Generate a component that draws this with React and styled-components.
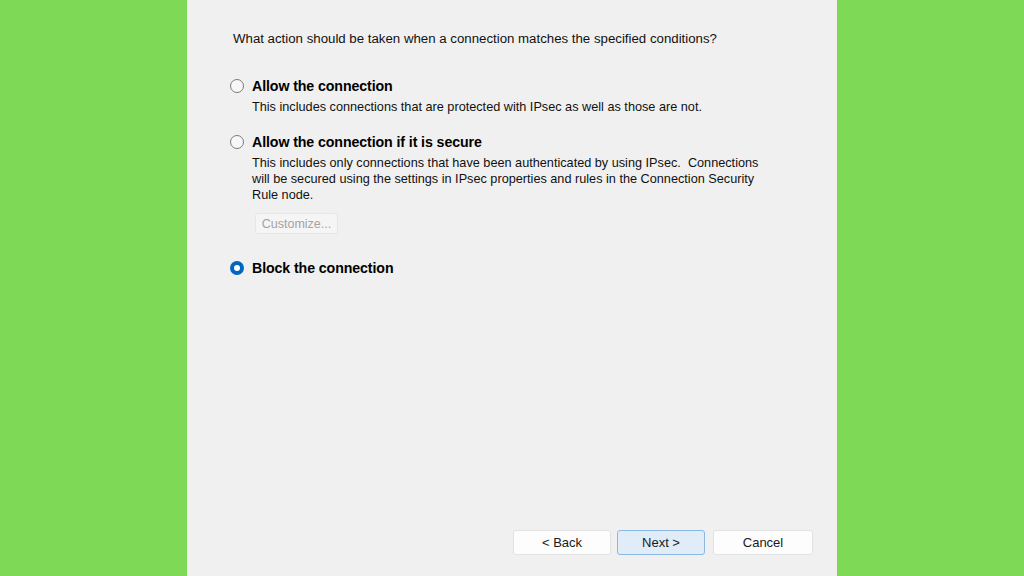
import React from 'react';
import styled, { createGlobalStyle } from 'styled-components';

const GlobalStyle = createGlobalStyle`
    html, body {
        margin: 0;
        padding: 0;
        background: #7ed957;
    }
    body {
        font-family: "Liberation Sans", Arial, sans-serif;
    }
`;

const Page = styled.div`
    display: flex;
    justify-content: center;
    height: 576px;
    background: #7ed957;
`;

const Panel = styled.div`
    width: 650px;
    height: 100%;
    box-sizing: border-box;
    background: #f0f0f0;
    padding: 31px 24px 21px 43px;
    display: flex;
    flex-direction: column;
    font-size: 13px;
    color: #000;
`;

const Question = styled.div`
    margin-left: 3px;
    line-height: 16px;
    font-size: 13.25px;
    color: #111;
`;

const Option = styled.div`
    margin-top: ${p => p.gap}px;
`;

const Row = styled.label`
    display: flex;
    align-items: center;
    gap: 8px;
    height: 16px;
`;

const Radio = styled.span`
    width: 14px;
    height: 14px;
    box-sizing: border-box;
    border-radius: 50%;
    flex: none;
    border: ${p => (p.checked ? '4.5px solid #0067c0' : '1.5px solid #7a7a7a')};
    background: ${p => (p.checked ? '#fff' : '#f7f7f7')};
`;

const Label = styled.span`
    font-weight: bold;
    font-size: 14.2px;
    letter-spacing: -0.1px;
`;

const Desc = styled.div`
    margin: 5px 0 0 22px;
    line-height: 16px;
    max-width: 520px;
    font-size: 12.7px;
    color: #111;
`;

const Customize = styled.button`
    margin: 10px 0 0 25px;
    width: 83px;
    height: 21px;
    padding: 0;
    border: 1px solid #e6e6e6;
    border-radius: 3px;
    background: #f5f5f5;
    color: #a3a3a3;
    font: inherit;
    font-size: 12.5px;
`;

const Footer = styled.div`
    margin-top: auto;
    display: flex;
    justify-content: flex-end;
    gap: 6px;
`;

const Button = styled.button`
    width: ${p => p.w}px;
    height: 25px;
    box-sizing: border-box;
    border-radius: 3px;
    border: 1px solid ${p => (p.primary ? '#8ab8e3' : '#e2e2e2')};
    background: ${p => (p.primary ? '#e0ecf8' : '#fdfdfd')};
    color: #1a1a1a;
    font: inherit;
    font-size: 13px;
    padding: 0;
    margin-left: ${p => p.ml || 0}px;
`;

export default function App() {
    return (
        <Page>
            <GlobalStyle />
            <Panel>
                <Question>What action should be taken when a connection matches the specified conditions?</Question>

                <Option gap={31}>
                    <Row><Radio /><Label>Allow the connection</Label></Row>
                    <Desc>This includes connections that are protected with IPsec as well as those are not.</Desc>
                </Option>

                <Option gap={19}>
                    <Row><Radio /><Label>Allow the connection if it is secure</Label></Row>
                    <Desc>
                        This includes only connections that have been authenticated by using IPsec.&nbsp; Connections
                        will be secured using the settings in IPsec properties and rules in the Connection Security
                        Rule node.
                    </Desc>
                    <Customize disabled>Customize...</Customize>
                </Option>

                <Option gap={26}>
                    <Row><Radio checked /><Label>Block the connection</Label></Row>
                </Option>

                <Footer>
                    <Button w={98}>&lt; Back</Button>
                    <Button w={88} primary>Next &gt;</Button>
                    <Button w={100} ml={2}>Cancel</Button>
                </Footer>
            </Panel>
        </Page>
    );
}
